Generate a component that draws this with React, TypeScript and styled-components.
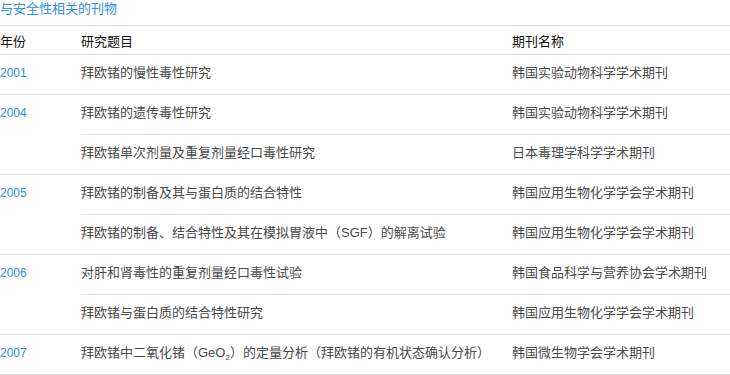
import React from "react";
import styled, { createGlobalStyle } from "styled-components";

const GlobalStyle = createGlobalStyle`
  html, body {
    margin: 0;
    padding: 0;
    background: #fff;
  }
  body {
    font-family: "Liberation Sans", "Noto Sans CJK SC", sans-serif;
    color: #333;
  }
`;

const Page = styled.div`
  width: 730px;
`;

const Title = styled.h3`
  margin: 0;
  padding: 0 0 7px;
  font-size: 13px;
  line-height: 18px;
  font-weight: normal;
  color: #2f8fdc;
  border-bottom: 1px solid #e4e4e4;
`;

const HeaderRow = styled.div`
  display: grid;
  grid-template-columns: 81px 431px 1fr;
  padding: 8px 0 4px;
  font-size: 13px;
  line-height: 16px;
  color: #111;
  border-bottom: 1px solid #e4e4e4;
`;

const Group = styled.div`
  display: grid;
  grid-template-columns: 81px 1fr;
  border-bottom: 1px solid #e4e4e4;
`;

const Year = styled.div`
  padding: 10px 0 13px;
  font-size: 12px;
  line-height: 16px;
  color: #2f8fdc;
`;

const Entries = styled.div`
  display: flex;
  flex-direction: column;
`;

const Entry = styled.div`
  display: grid;
  grid-template-columns: 431px 1fr;
  padding: 10px 0 13px;
  font-size: 13px;
  line-height: 16px;
  color: #4a4a4a;

  & + & {
    border-top: 1px solid #e4e4e4;
  }
`;

const Sub = styled.sub`
  font-size: 8px;
  line-height: 0;
  vertical-align: -3px;
`;

type Item = { topic: React.ReactNode; journal: string };

const groups: { year: string; items: Item[] }[] = [
  {
    year: "2001",
    items: [{ topic: "拜欧锗的慢性毒性研究", journal: "韩国实验动物科学学术期刊" }],
  },
  {
    year: "2004",
    items: [
      { topic: "拜欧锗的遗传毒性研究", journal: "韩国实验动物科学学术期刊" },
      { topic: "拜欧锗单次剂量及重复剂量经口毒性研究", journal: "日本毒理学科学学术期刊" },
    ],
  },
  {
    year: "2005",
    items: [
      { topic: "拜欧锗的制备及其与蛋白质的结合特性", journal: "韩国应用生物化学学会学术期刊" },
      {
        topic: "拜欧锗的制备、结合特性及其在模拟胃液中（SGF）的解离试验",
        journal: "韩国应用生物化学学会学术期刊",
      },
    ],
  },
  {
    year: "2006",
    items: [
      { topic: "对肝和肾毒性的重复剂量经口毒性试验", journal: "韩国食品科学与营养协会学术期刊" },
      { topic: "拜欧锗与蛋白质的结合特性研究", journal: "韩国应用生物化学学会学术期刊" },
    ],
  },
  {
    year: "2007",
    items: [
      {
        topic: (
          <>
            拜欧锗中二氧化锗（GeO<Sub>2</Sub>）的定量分析（拜欧锗的有机状态确认分析）
          </>
        ),
        journal: "韩国微生物学会学术期刊",
      },
    ],
  },
];

export default function App() {
  return (
    <Page>
      <GlobalStyle />
      <Title>与安全性相关的刊物</Title>
      <HeaderRow>
        <div>年份</div>
        <div>研究题目</div>
        <div>期刊名称</div>
      </HeaderRow>
      {groups.map((group) => (
        <Group key={group.year}>
          <Year>{group.year}</Year>
          <Entries>
            {group.items.map((item, index) => (
              <Entry key={index}>
                <div>{item.topic}</div>
                <div>{item.journal}</div>
              </Entry>
            ))}
          </Entries>
        </Group>
      ))}
    </Page>
  );
}
